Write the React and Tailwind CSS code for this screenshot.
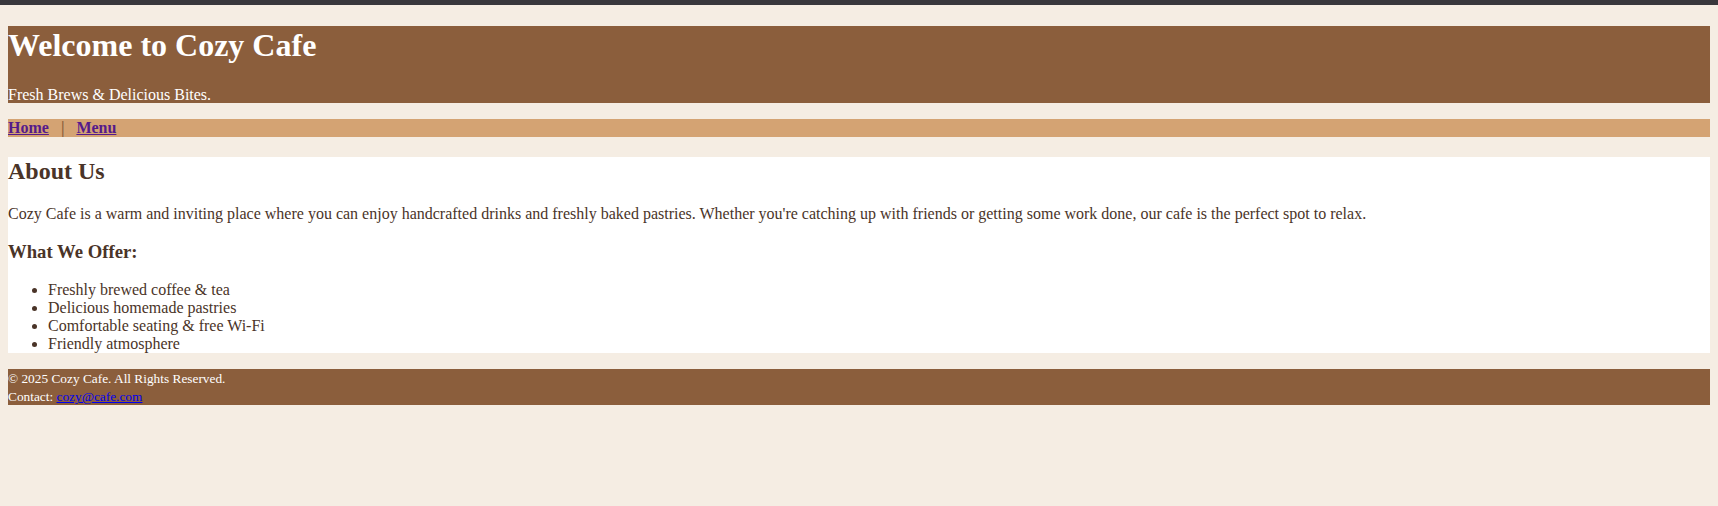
export default function App() {
  const offers = [
    "Freshly brewed coffee & tea",
    "Delicious homemade pastries",
    "Comfortable seating & free Wi-Fi",
    "Friendly atmosphere",
  ];

  return (
    <div className="min-h-[506px] bg-[#f5ede3] font-['Liberation_Serif',serif] text-[16px]">
      {/* top strip */}
      <div className="h-[5px] bg-[#38373c]"></div>

      <div className="px-2 pb-[100px]">
        {/* Header */}
        <header className="mt-[21px] bg-[#8b5e3c] pt-px text-white">
          <h1 className="mb-[22px] text-[32px] font-bold leading-[37px]">Welcome to Cozy Cafe</h1>
          <p className="leading-[17px]">Fresh Brews &amp; Delicious Bites.</p>
        </header>

        {/* Nav */}
        <nav className="mt-4 bg-[#d4a373] font-bold leading-[18px]">
          <a href="#" className="text-[#551a8b] underline">Home</a>
          <span className="mx-3 text-[#8b5e3c]">|</span>
          <a href="#" className="text-[#551a8b] underline">Menu</a>
        </nav>

        {/* About */}
        <main className="mt-5 bg-white text-[#4a3428]">
          <h2 className="text-[24px] font-bold leading-[28px]">About Us</h2>
          <p className="mt-5 leading-[18px]">
            Cozy Cafe is a warm and inviting place where you can enjoy handcrafted drinks and freshly baked pastries. Whether you're catching up with friends or getting some work done, our cafe is the perfect spot to relax.
          </p>
          <h3 className="mt-[18px] text-[18.72px] font-bold leading-[22px]">What We Offer:</h3>
          <ul className="mt-[18px] list-disc pl-10 leading-[18px]">
            {offers.map((item) => (
              <li key={item}>{item}</li>
            ))}
          </ul>
        </main>

        {/* Footer */}
        <footer className="mt-4 bg-[#8b5e3c] pt-px text-[13.33px] leading-[17px] text-white">
          <p className="leading-[18px]">&copy; 2025 Cozy Cafe. All Rights Reserved.</p>
          <p>
            Contact: <a href="#" className="text-[#0000ee] underline">cozy@cafe.com</a>
          </p>
        </footer>
      </div>
    </div>
  );
}
